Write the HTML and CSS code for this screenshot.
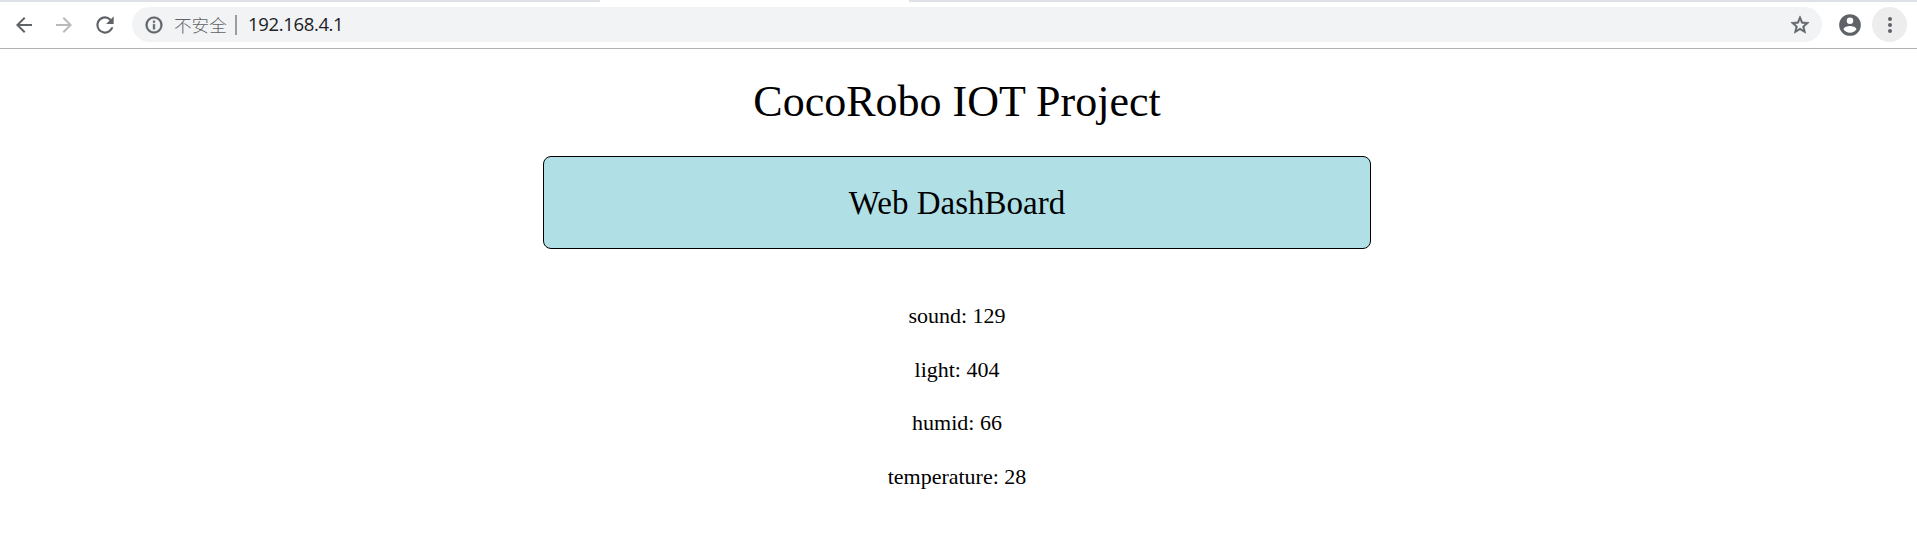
FILE: index.html
```html
<!DOCTYPE html>
<html lang="en">
<head>
<meta charset="utf-8">
<title>CocoRobo IOT Project</title>
<link rel="stylesheet" href="styles.css">
</head>
<body>
<header class="browser">
  <div class="tabstrip"><span class="tabstrip-left"></span><span class="tab"></span><span class="tabstrip-right"></span></div>
  <div class="toolbar">
    <div class="nav">
      <svg class="icon" width="24" height="24" viewBox="0 0 24 24"><path d="M20 11H7.83l5.59-5.59L12 4l-8 8 8 8 1.41-1.41L7.83 13H20z"/></svg>
      <svg class="icon disabled" width="24" height="24" viewBox="0 0 24 24"><path d="M12 4l-1.41 1.41L16.17 11H4v2h12.17l-5.58 5.59L12 20l8-8z"/></svg>
      <svg class="icon" width="26" height="26" viewBox="0 0 24 24"><path d="M17.65 6.35A7.96 7.96 0 0 0 12 4a8 8 0 1 0 7.73 10h-2.08A6 6 0 1 1 12 6c1.66 0 3.14.69 4.22 1.78L13 11h7V4z"/></svg>
    </div>
    <div class="omnibox">
      <svg class="icon bold" width="20" height="20" viewBox="0 0 24 24"><path d="M11 17h2v-6h-2zm0-8h2V7h-2zm1-7a10 10 0 1 0 0 20 10 10 0 0 0 0-20zm0 18a8 8 0 1 1 0-16 8 8 0 0 1 0 16z"/></svg>
      <span class="security" lang="zh">不安全</span>
      <span class="divider"></span>
      <span class="url">192.168.4.1</span>
      <svg class="icon star bold" width="22" height="22" viewBox="0 0 24 24"><path d="M22 9.24l-7.19-.62L12 2 9.19 8.63 2 9.24l5.46 4.73L5.82 21 12 17.27 18.18 21l-1.63-7.03zM12 15.4l-3.76 2.27 1-4.28-3.32-2.88 4.38-.38L12 6.1l1.71 4.04 4.38.38-3.32 2.88 1 4.28z"/></svg>
    </div>
    <svg class="icon avatar" width="26" height="26" viewBox="0 0 24 24"><path d="M12 2a10 10 0 1 0 0 20 10 10 0 0 0 0-20zm0 3a3 3 0 1 1 0 6 3 3 0 0 1 0-6zm0 14.2a7.2 7.2 0 0 1-6-3.22c.03-1.99 4-3.08 6-3.08s5.97 1.09 6 3.08a7.2 7.2 0 0 1-6 3.22z"/></svg>
    <div class="menu">
      <svg class="icon" width="24" height="24" viewBox="0 0 24 24"><circle cx="12" cy="6" r="2"/><circle cx="12" cy="12" r="2"/><circle cx="12" cy="18" r="2"/></svg>
    </div>
  </div>
</header>
<main class="page">
  <h1 class="title">CocoRobo IOT Project</h1>
  <div class="banner">Web DashBoard</div>
  <div class="readings">
    <p class="reading">sound: 129</p>
    <p class="reading">light: 404</p>
    <p class="reading">humid: 66</p>
    <p class="reading">temperature: 28</p>
  </div>
</main>
</body>
</html>
```
FILE: styles.css
```css
* { box-sizing: border-box; }
body {
  margin: 0;
  height: 558px;
  overflow: hidden;
  background: #fff;
  color: #000;
  font-family: "Liberation Serif", "Times New Roman", serif;
}
.browser { height: 49px; border-bottom: 1px solid #b3b3b3; }
.tabstrip { display: flex; height: 2px; }
.tabstrip-left { width: 600px; background: #dee1e6; }
.tab { width: 309px; }
.tabstrip-right { flex: 1; background: #dee1e6; }
.toolbar {
  display: flex;
  align-items: center;
  height: 45px;
  padding: 0 10px 0 12px;
}
.icon { display: block; flex: none; fill: #5f6368; }
.bold { stroke: #5f6368; stroke-width: 0.6; }
.disabled { fill: #bababa; }
.nav { display: flex; align-items: center; gap: 16px; width: 120px; }
.omnibox {
  display: flex;
  align-items: center;
  width: 1690px;
  height: 35px;
  padding: 0 11px 0 12px;
  border-radius: 18px;
  background: #f1f3f4;
}
.security {
  width: 54px;
  margin-left: 10px;
  color: #5f6368;
  font: 300 17.6px/33px "Noto Sans CJK SC", sans-serif;
  white-space: nowrap;
}
.divider { width: 2px; height: 20px; margin-left: 7px; background: #9a9da1; }
.url {
  margin-left: 11px;
  padding-bottom: 2px;
  color: #202124;
  font: 18.5px/32px "Open Sans", sans-serif;
  letter-spacing: -0.35px;
}
.star { margin-left: auto; }
.avatar { margin-left: 15px; }
.menu {
  display: grid;
  place-items: center;
  width: 35px;
  height: 35px;
  margin-left: auto;
  border-radius: 50%;
  background: #ededed;
}
.page { display: flex; flex-direction: column; align-items: center; padding-right: 3px; text-align: center; }
.title { margin: 28px 0 29px; font-size: 44px; font-weight: 400; line-height: 50px; }
.banner {
  width: 828px;
  height: 93px;
  border: 1px solid #000;
  border-radius: 8px;
  background: #b0e0e6;
  font-size: 33px;
  line-height: 92px;
}
.readings { display: grid; grid-auto-rows: 53.67px; margin-top: 40px; }
.reading { margin: 0; font-size: 22px; line-height: 53.67px; }
```
